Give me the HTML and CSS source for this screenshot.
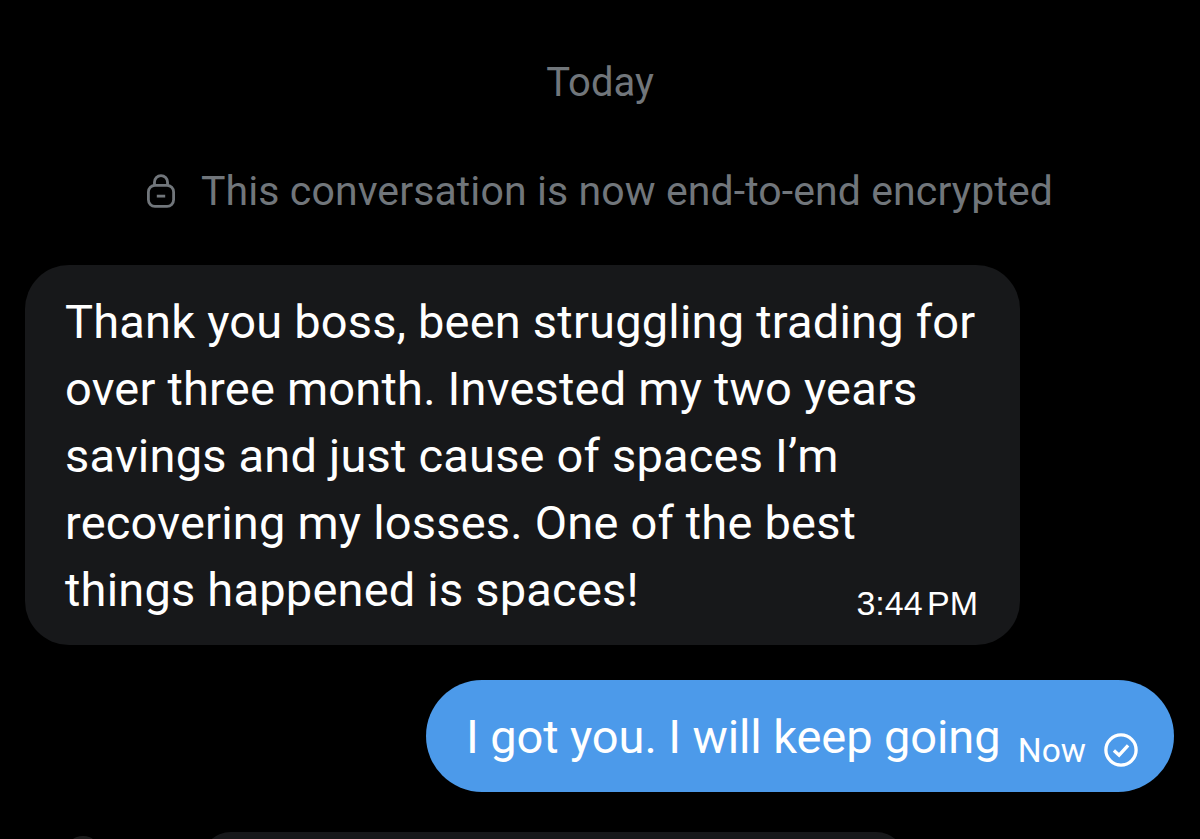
FILE: index.html
```html
<!DOCTYPE html>
<html lang="en">

<head>
    <meta charset="UTF-8">
    <meta name="viewport" content="width=device-width, initial-scale=1.0">
    <title>Messages</title>
    <link rel="stylesheet" href="styles.css">
</head>

<body>
    <div class="chat">
        <p class="day">Today</p>
        <p class="notice">
            <svg class="lock" viewBox="0 0 30 36" fill="none" stroke="currentColor" stroke-width="3">
                <rect x="1.5" y="12" width="27" height="22.5" rx="7"></rect>
                <path d="M8 12V8.500a7 7 0 0 1 14 0V12"></path>
                <path d="M10.500 23.500h9"></path>
            </svg>
            <span>This conversation is now end-to-end encrypted</span>
        </p>
        <div class="bubble bubble-in">
            <p class="bubble-text">Thank you boss, been struggling trading for<br>over three month. Invested my two years<br>savings and just cause of spaces I’m<br>recovering my losses. One of the best<br>things happened is spaces!</p>
            <span class="time">3:44 PM</span>
        </div>
        <div class="bubble bubble-out">
            <span class="bubble-text">I got you. I will keep going</span>
            <span class="status">Now</span>
            <svg class="check" viewBox="0 0 36 36" fill="none" stroke="currentColor">
                <circle cx="18" cy="18" r="16" stroke-width="3.500"></circle>
                <path d="M10.500 18.500l5.500 5 9.500-10.500" stroke-width="3.500"></path>
            </svg>
        </div>
        <div class="composer">
            <div class="avatar"></div>
            <div class="input"></div>
        </div>
    </div>
</body>

</html>
```
FILE: styles.css
```css
html, body {
    margin: 0;
    padding: 0;
    height: 100%;
    background: #000;
    overflow: hidden;
}

.chat {
    height: 839px;
    font-family: 'Roboto', sans-serif;
    color: #fff;
    overflow: hidden;
}

.day {
    margin: 0;
    padding-top: 59px;
    text-align: center;
    font-size: 40px;
    line-height: 48px;
    color: #71767b;
}

.notice {
    margin: 60px 0 0;
    display: flex;
    align-items: center;
    justify-content: center;
    gap: 26px;
    font-size: 41px;
    letter-spacing: 0.1px;
    line-height: 48px;
    color: #71767b;
}

.lock {
    width: 28px;
    height: 34px;
}

.bubble {
    box-sizing: border-box;
}

.bubble-in {
    position: relative;
    margin: 50px 0 0 25px;
    width: 995px;
    height: 380px;
    padding: 23px 40px;
    background: #17181a;
    border-radius: 44px;
}

.bubble-text {
    margin: 0;
    font-size: 47px;
    letter-spacing: 0.2px;
    line-height: 67px;
}

.time {
    position: absolute;
    right: 42px;
    bottom: 22px;
    font-family: 'Liberation Sans', sans-serif;
    font-size: 34px;
    line-height: 40px;
    word-spacing: -5px;
}

.bubble-out {
    margin: 35px 26px 0 auto;
    width: 748px;
    height: 112px;
    padding: 0 36px 0 40px;
    display: flex;
    align-items: center;
    background: #4c9aea;
    border-radius: 56px;
}

.bubble-out .bubble-text {
    letter-spacing: -0.1px;
}

.status {
    margin: 28px 0 0 auto;
    font-size: 33.5px;
}

.check {
    width: 34px;
    height: 34px;
    margin: 28px 0 0 18px;
}

.composer {
    margin: 40px 0 0 65px;
    display: flex;
    gap: 100px;
}

.avatar {
    width: 36px;
    height: 36px;
    margin-top: 4px;
    border-radius: 50%;
    background: #1c1c1c;
}

.input {
    width: 705px;
    height: 60px;
    border-radius: 30px;
    background: #17181a;
}
```
